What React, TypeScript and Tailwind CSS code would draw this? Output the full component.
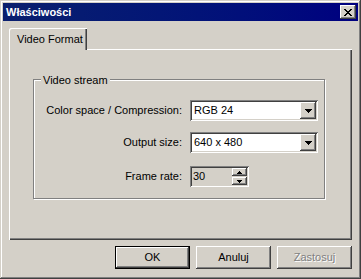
const RAISED =
  "shadow-[inset_-1px_-1px_#404040,inset_1px_1px_#ffffff,inset_-2px_-2px_#808080,inset_2px_2px_#d4d0c8]";
const SUNKEN =
  "shadow-[inset_1px_1px_#808080,inset_-1px_-1px_#ffffff,inset_2px_2px_#404040,inset_-2px_-2px_#d4d0c8]";

function DownArrow() {
  return (
    <svg width="7" height="4" viewBox="0 0 7 4" className="block">
      <path d="M0 0h7v1H0zM1 1h5v1H1zM2 2h3v1H2zM3 3h1v1H3z" fill="#000" />
    </svg>
  );
}

function SmallArrow({ up }: { up?: boolean }) {
  return (
    <svg width="5" height="3" viewBox="0 0 5 3" className="block">
      {up ? (
        <path d="M2 0h1v1H2zM1 1h3v1H1zM0 2h5v1H0z" fill="#000" />
      ) : (
        <path d="M0 0h5v1H0zM1 1h3v1H1zM2 2h1v1H2z" fill="#000" />
      )}
    </svg>
  );
}

function Combo({ value }: { value: string }) {
  return (
    <div className={`flex h-[21px] w-[128px] items-center bg-white p-[2px] ${SUNKEN}`}>
      <span className="flex-1 pl-[2px] text-black">{value}</span>
      <div className={`flex h-[17px] w-[16px] items-center justify-center bg-[#d4d0c8] ${RAISED}`}>
        <DownArrow />
      </div>
    </div>
  );
}

function Spin({ value }: { value: string }) {
  return (
    <div className={`flex h-[21px] w-[59px] items-center bg-[#d4d0c8] p-[2px] ${SUNKEN}`}>
      <span className="flex-1 pl-[1px] text-black">{value}</span>
      <div className="flex w-[15px] flex-col">
        <div className={`flex h-[8px] items-center justify-center ${RAISED}`}>
          <SmallArrow up />
        </div>
        <div className={`mt-px flex h-[8px] items-center justify-center ${RAISED}`}>
          <SmallArrow />
        </div>
      </div>
    </div>
  );
}

function Row({ label, children }: { label: string; children: React.ReactNode }) {
  return (
    <div className="flex items-center">
      <span className="w-[149px] pb-px pr-px text-right text-black">{label}</span>
      <div className="ml-[7px]">{children}</div>
    </div>
  );
}

function Btn({ label, def, disabled }: { label: string; def?: boolean; disabled?: boolean }) {
  return (
    <div
      className={`h-[23px] w-[75px] bg-[#d4d0c8] ${def ? "border border-black" : ""}`}
    >
      <div className={`flex h-full w-full items-center justify-center ${RAISED}`}>
        <span
          className={
            disabled ? "text-[#808080] [text-shadow:1px_1px_0_#ffffff]" : "text-black"
          }
        >
          {label}
        </span>
      </div>
    </div>
  );
}

export default function App() {
  return (
    <div className="flex h-[279px] w-[361px] flex-col bg-[#d4d0c8] p-[3px] font-['Liberation_Sans',Arial,sans-serif] text-[11px] text-black shadow-[inset_-1px_-1px_#404040,inset_1px_1px_#d4d0c8,inset_-2px_-2px_#808080,inset_2px_2px_#ffffff]">
      <div className="flex h-[18px] items-center justify-between bg-gradient-to-r from-[#0a1f6e] to-[#000080] pl-[3px] pr-[2px]">
        <span className="text-[11px] font-bold text-white">Właściwości</span>
        <div className={`flex h-[14px] w-[16px] items-center justify-center bg-[#d4d0c8] ${RAISED}`}>
          <svg width="8" height="7" viewBox="0 0 8 7" className="block">
            <path
              d="M0 0h2v1H0zM6 0h2v1H6zM1 1h2v1H1zM5 1h2v1H5zM2 2h4v1H2zM3 3h2v1H3zM2 4h4v1H2zM1 5h2v1H1zM5 5h2v1H5zM0 6h2v1H0zM6 6h2v1H6z"
              fill="#000"
            />
          </svg>
        </div>
      </div>

      <div className="px-[6px] pt-[7px]">
        <div className="flex">
          <div className="relative z-10 -mb-px flex h-[22px] w-[78px] items-center rounded-tl-[2px] bg-[#d4d0c8] pl-[8px] shadow-[inset_1px_1px_#ffffff,inset_-1px_0_#404040,inset_-2px_0_#808080]">
            Video Format
          </div>
        </div>
        <div className="h-[191px] pt-[30px] shadow-[inset_1px_1px_#ffffff,inset_-1px_-1px_#404040,inset_-2px_-2px_#808080]">
          <div className="relative ml-[24px] h-[120px] w-[292px] border border-[#808080] pt-[20px] shadow-[inset_1px_1px_#ffffff,1px_1px_#ffffff]">
            <span className="absolute -top-[8px] left-[7px] bg-[#d4d0c8] px-[2px]">Video stream</span>
            <div className="flex flex-col gap-[11px]">
              <Row label="Color space / Compression:">
                <Combo value="RGB 24" />
              </Row>
              <Row label="Output size:">
                <Combo value="640 x 480" />
              </Row>
              <div className="mt-[2px]">
                <Row label="Frame rate:">
                  <Spin value="30" />
                </Row>
              </div>
            </div>
          </div>
        </div>
      </div>

      <div className="flex justify-end gap-[6px] pr-[6px] pt-[6px]">
        <Btn label="OK" def />
        <Btn label="Anuluj" />
        <Btn label="Zastosuj" disabled />
      </div>
    </div>
  );
}
